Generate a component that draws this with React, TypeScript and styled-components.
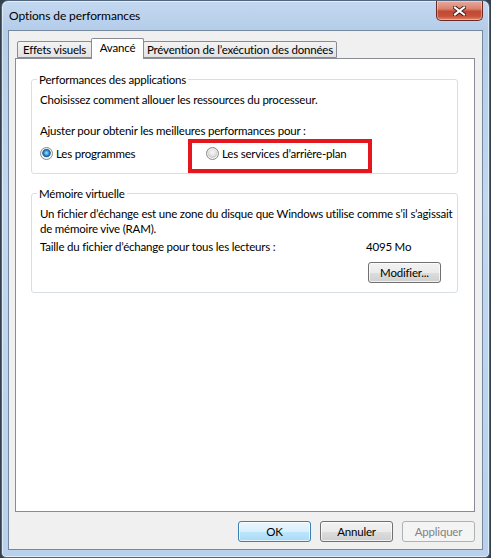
import styled, { createGlobalStyle } from "styled-components";

const GlobalStyle = createGlobalStyle`
  html, body {
    margin: 0;
    padding: 0;
    background: #33414f;
  }
  body {
    font-family: Lato, "Noto Sans", sans-serif;
    font-size: 11.5px;
    letter-spacing: -0.2px;
    color: #000;
  }
`;

const Window = styled.div`
  box-sizing: border-box;
  width: 489px;
  height: 558px;
  margin-left: 1px;
  display: flex;
  flex-direction: column;
  border: 1px solid #52667e;
  border-radius: 7px 7px 5px 5px;
  background: linear-gradient(180deg, #c3d8f0 0px, #bdd3ed 14px, #b4cde9 29px, #c2d8f1 200px, #b9d1ec 558px);
  box-shadow: inset 0 0 0 1px rgba(255, 255, 255, 0.55);
`;

const TitleBar = styled.div`
  height: 29px;
  display: flex;
  justify-content: space-between;
  align-items: flex-start;
  padding-left: 7px;
  flex-shrink: 0;
`;

const Title = styled.span`
  margin-top: 7px;
  line-height: 16px;
  font-size: 12px;
  letter-spacing: -0.1px;
  color: #000;
`;

const CloseButton = styled.div`
  width: 47px;
  height: 20px;
  margin-right: 6px;
  box-sizing: border-box;
  display: flex;
  align-items: center;
  justify-content: center;
  border: 1px solid #6d2a22;
  border-top: none;
  border-radius: 0 0 5px 5px;
  background: linear-gradient(180deg, #e9a99a 0%, #d98572 40%, #c14a34 55%, #c8513a 80%, #dc8a6e 100%);
  box-shadow: inset 0 0 0 1px rgba(255, 255, 255, 0.35);
`;

const Client = styled.div`
  flex: 1;
  margin: 0 6px 7px 6px;
  border: 1px solid #76889d;
  background: #f0f0f0;
  display: flex;
  flex-direction: column;
  padding: 7px 7px 7px 6px;
`;

const TabStrip = styled.div`
  height: 20px;
  display: flex;
  align-items: flex-end;
  padding-left: 2px;
`;

const Tab = styled.div<{ $w: number; $active?: boolean }>`
  box-sizing: border-box;
  width: ${(p) => p.$w}px;
  height: ${(p) => (p.$active ? 21 : 17)}px;
  margin-bottom: ${(p) => (p.$active ? -1 : 0)}px;
  margin-left: ${(p) => (p.$active ? -1 : 0)}px;
  margin-right: ${(p) => (p.$active ? -1 : 0)}px;
  position: relative;
  z-index: ${(p) => (p.$active ? 2 : 1)};
  border: 1px solid #898c95;
  border-bottom: ${(p) => (p.$active ? "none" : "1px solid #898c95")};
  border-radius: 2px 2px 0 0;
  background: ${(p) => (p.$active ? "#ffffff" : "linear-gradient(180deg, #f3f3f3 0%, #ebebeb 50%, #e2e2e2 100%)")};
  display: flex;
  justify-content: center;
  align-items: ${(p) => (p.$active ? "flex-start" : "center")};
  padding-top: ${(p) => (p.$active ? 1 : 0)}px;
  line-height: 15px;
  white-space: nowrap;
`;

const Panel = styled.div`
  flex: 1;
  border: 1px solid #898c95;
  background: #fff;
  padding: 13px 16px 0 15px;
  display: flex;
  flex-direction: column;
`;

const Group = styled.fieldset<{ $gap?: number }>`
  margin: ${(p) => p.$gap ?? 0}px 0 0 0;
  padding: 0 16px ${(p) => (p.$gap ? 9 : 0)}px 8px;
  border: 1px solid #d5dfe5;
  border-radius: 3px;
  min-width: 0;
`;

const Legend = styled.legend`
  padding: 0 2px;
  margin-left: -3px;
  line-height: 15px;
`;

const Line = styled.div<{ $top: number }>`
  margin-top: ${(p) => p.$top}px;
  line-height: 15px;
  white-space: nowrap;
`;

const RadioRow = styled.div`
  display: flex;
  align-items: flex-start;
  margin-top: 1px;
`;

const Option = styled.label<{ $w?: number }>`
  display: flex;
  align-items: center;
  gap: 3px;
  line-height: 15px;
  white-space: nowrap;
  ${(p) => (p.$w ? `width: ${p.$w}px;` : "")}
`;

const FirstOption = styled(Option)`
  margin-top: 7px;
`;

const Highlight = styled.div`
  box-sizing: border-box;
  width: 184px;
  height: 34px;
  border: 4px solid #e4171f;
  padding: 3px 0 0 14px;
`;

const Radio = styled.span<{ $checked?: boolean }>`
  box-sizing: border-box;
  width: 13px;
  height: 13px;
  flex-shrink: 0;
  border-radius: 50%;
  border: 1px solid #8a8a8a;
  background: ${(p) =>
    p.$checked
      ? "radial-gradient(circle at 50% 45%, #9ee3ff 0px, #2f8fd6 2.5px, #1b5f9e 3.5px, #3c6f99 4px, #e9e9e9 4.6px, #f6f6f6 100%)"
      : "radial-gradient(circle at 50% 40%, #f8f8f8 0px, #e6e6e6 3px, #c9c9c9 5px, #eeeeee 6px)"};
  box-shadow: inset 0 0 0 1px rgba(255, 255, 255, 0.6);
`;

const ValueRow = styled.div`
  display: grid;
  grid-template-columns: 1fr 75px;
  margin-top: 3px;
  line-height: 15px;
  white-space: nowrap;
`;

const ButtonRow = styled.div<{ $top: number }>`
  display: flex;
  justify-content: flex-end;
  gap: 9px;
  margin-top: ${(p) => p.$top}px;
`;

const Button = styled.button<{ $variant?: "default" | "disabled" }>`
  box-sizing: border-box;
  width: 73px;
  height: 21px;
  padding: 0;
  font-family: inherit;
  font-size: 11.5px;
  letter-spacing: -0.2px;
  line-height: 15px;
  border-radius: 3px;
  border: 1px solid
    ${(p) => (p.$variant === "default" ? "#3c7fb1" : p.$variant === "disabled" ? "#adb2b5" : "#707070")};
  color: ${(p) => (p.$variant === "disabled" ? "#838383" : "#000")};
  background: ${(p) =>
    p.$variant === "default"
      ? "linear-gradient(180deg, #eaf6fd 0%, #d9f0fc 50%, #bee6fd 51%, #a7d9f5 100%)"
      : p.$variant === "disabled"
      ? "#f4f4f4"
      : "linear-gradient(180deg, #f2f2f2 0%, #ebebeb 50%, #dddddd 51%, #cfcfcf 100%)"};
  box-shadow: ${(p) => (p.$variant === "disabled" ? "none" : "inset 0 0 0 1px rgba(255,255,255,0.7)")};
`;

const ModifyRow = styled.div`
  display: flex;
  justify-content: flex-end;
  margin-top: 8px;
`;

export default function App() {
  return (
    <>
      <GlobalStyle />
      <Window>
        <TitleBar>
          <Title>Options de performances</Title>
          <CloseButton>
            <svg width="13" height="10" viewBox="0 0 13 10">
              <path d="M2 1.5 L11 8.5 M11 1.5 L2 8.5" stroke="#3d1a15" strokeWidth="4" strokeLinecap="square" />
              <path d="M2 1.5 L11 8.5 M11 1.5 L2 8.5" stroke="#ffffff" strokeWidth="2.2" strokeLinecap="square" />
            </svg>
          </CloseButton>
        </TitleBar>
        <Client>
          <TabStrip>
            <Tab $w={75}>Effets visuels</Tab>
            <Tab $w={53} $active>
              Avancé
            </Tab>
            <Tab $w={194}>Prévention de l’exécution des données</Tab>
          </TabStrip>
          <Panel>
            <Group>
              <Legend>Performances des applications</Legend>
              <Line $top={5}>Choisissez comment allouer les ressources du processeur.</Line>
              <Line $top={16}>Ajuster pour obtenir les meilleures performances pour :</Line>
              <RadioRow>
                <FirstOption $w={148}>
                  <Radio $checked />
                  Les programmes
                </FirstOption>
                <Highlight>
                  <Option>
                    <Radio />
                    Les services d’arrière-plan
                  </Option>
                </Highlight>
              </RadioRow>
            </Group>
            <Group $gap={12}>
              <Legend>Mémoire virtuelle</Legend>
              <Line $top={5}>
                Un fichier d’échange est une zone du disque que Windows utilise comme s’il s’agissait
                <br />
                de mémoire vive (RAM).
              </Line>
              <ValueRow>
                <span>Taille du fichier d’échange pour tous les lecteurs :</span>
                <span>4095 Mo</span>
              </ValueRow>
              <ModifyRow>
                <Button>Modifier...</Button>
              </ModifyRow>
            </Group>
          </Panel>
          <ButtonRow $top={9}>
            <Button $variant="default">OK</Button>
            <Button>Annuler</Button>
            <Button $variant="disabled">Appliquer</Button>
          </ButtonRow>
        </Client>
      </Window>
    </>
  );
}
